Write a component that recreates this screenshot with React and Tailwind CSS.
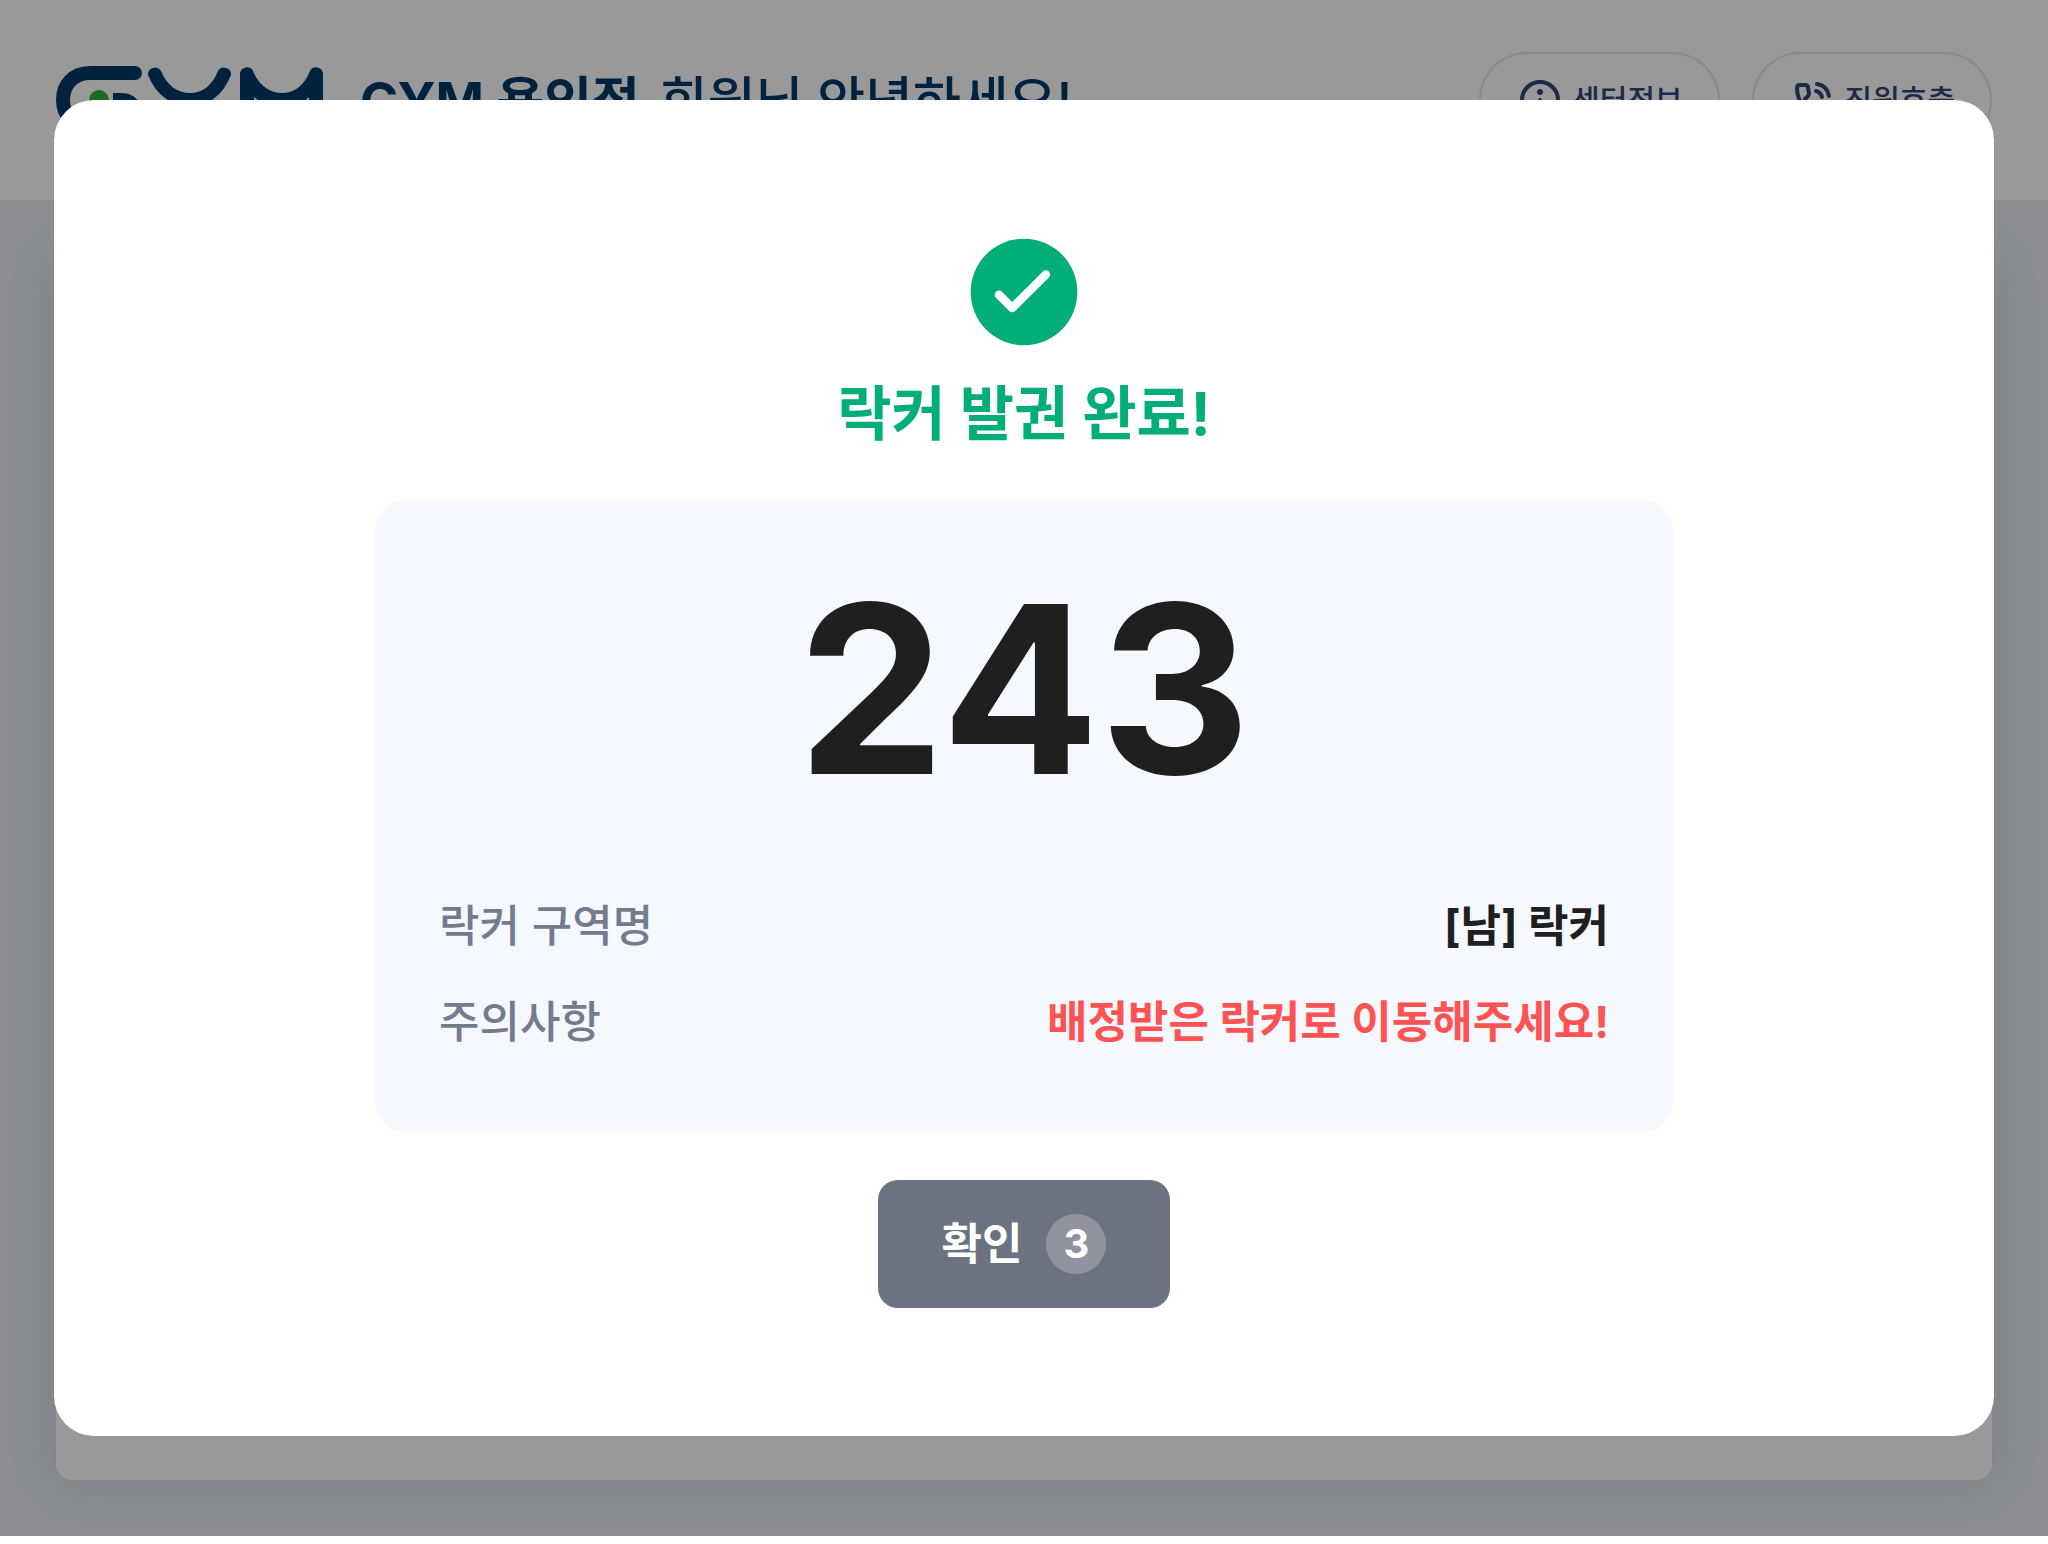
const INFO_ROWS = [
  { label: "락커 구역명", value: "[남] 락커", tone: "text-[#1f1f1f]" },
  { label: "주의사항", value: "배정받은 락커로 이동해주세요!", tone: "text-[#ff5252]" },
];

function Logo() {
  return (
    <svg viewBox="0 0 268 68" className="h-[68px] w-[268px] shrink-0" fill="none" role="img" aria-label="GYM">
      <path d="M79 7H34C17 7 7 19 7 34s10 27 27 27h41V39" stroke="#003a69" strokeWidth="14" strokeLinecap="round" strokeLinejoin="round" />
      <g fill="#003a69">
        <path d="M57 27h8c8 0 14 3 17 8v20H68V40H57z" />
        <path d="M92 9a7 7 0 0 1 13-4c6 15 17 22 29 22s22-7 28-22a7 7 0 0 1 13 4c-6 14-14 26-34 31v28h-14V40c-20-5-29-17-35-31z" />
        <path d="M184 7a7 7 0 0 1 13-2c6 15 17 22 29 22s22-7 28-22a7 7 0 0 1 13 2v61h-14V31c-8 7-16 10-27 10s-20-3-28-10v37h-14z" />
      </g>
      <circle cx="43" cy="34" r="10" fill="#2fae43" />
    </svg>
  );
}

function InfoIcon() {
  return (
    <svg viewBox="0 0 48 48" className="size-12 shrink-0" fill="none" aria-hidden="true">
      <circle cx="24" cy="24" r="18" stroke="#2f4679" strokeWidth="4" />
      <circle cx="24" cy="16" r="3" fill="#2f4679" />
      <path d="M24 24v9" stroke="#2f4679" strokeWidth="4" strokeLinecap="round" />
    </svg>
  );
}

function CallIcon() {
  return (
    <svg viewBox="0 0 48 48" className="size-12 shrink-0" fill="none" stroke="#2f4679" strokeWidth="4" strokeLinecap="round" strokeLinejoin="round" aria-hidden="true">
      <path d="M11 9h5c2 0 3 1 3 3l1 5c0 1 0 2-1 3l-3 3c2 4 5 7 10 9l3-3c1-1 2-1 3-1l5 1c2 0 3 1 3 3v5c0 2-1 3-3 3C20 40 8 28 8 12c0-2 1-3 3-3z" />
      <path d="M28 8C34 9 39 13 40 20M27 15c4 1 5 3 6 6" />
    </svg>
  );
}

function HeaderButton({ icon, children }) {
  return (
    <button type="button" className="flex h-24 items-center gap-2 rounded-full border-2 border-[#e6e6e6] px-[35px] text-[30px] font-medium text-[#2f4679]">
      {icon}
      {children}
    </button>
  );
}

function CheckBadge() {
  return (
    <svg viewBox="0 0 24 24" className="size-32" fill="none" aria-hidden="true">
      <circle cx="12" cy="12" r="10" fill="#02ae78" />
      <path d="M7.300 12.500l2.500 2.500 6.300-6.300" stroke="#fff" strokeWidth="1.600" strokeLinecap="round" strokeLinejoin="round" />
    </svg>
  );
}

export default function App() {
  return (
    <div className="h-screen overflow-hidden bg-white pb-2 font-['Inter','Noto_Sans_CJK_KR',sans-serif]">
      <div className="relative flex h-full flex-col bg-[#e8ecf1]">
        <header className="flex h-[200px] shrink-0 items-center justify-between bg-white px-14">
          <div className="flex items-center gap-9">
            <Logo />
            <p className="flex items-center gap-5 pt-1 text-[52px] font-medium whitespace-nowrap text-[#003a69]">
              <strong className="font-bold">GYM 용인점</strong>
              <span>회원님 안녕하세요!</span>
            </p>
          </div>
          <nav className="flex gap-8">
            <HeaderButton icon={<InfoIcon />}>센터정보</HeaderButton>
            <HeaderButton icon={<CallIcon />}>직원호출</HeaderButton>
          </nav>
        </header>
        <main className="flex flex-1 px-14 py-14">
          <section className="flex-1 rounded-2xl bg-white shadow-[0_0_48px_rgba(60,70,150,0.15)]" />
        </main>

        <div className="absolute inset-0 flex bg-black/40 px-[54px] py-[100px]">
          <div role="dialog" aria-modal="true" aria-labelledby="dialog-title" className="flex flex-1 flex-col items-center rounded-[40px] bg-white px-32 py-32">
            <CheckBadge />
            <h1 id="dialog-title" className="mt-4 text-[59px] leading-[84px] font-bold text-[#02ae78]">
              락커 발권 완료!
            </h1>
            <section className="mt-11 w-full max-w-[1298px] rounded-[32px] bg-[#f5f8ff] px-16 pt-16 pb-[78px]">
              <p className="text-center text-[234px] leading-[250px] font-bold text-[#1f1f1f]">243</p>
              <dl className="mt-20 flex flex-col gap-8 text-[44px] leading-[64px]">
                {INFO_ROWS.map((row) => (
                  <div key={row.label} className="flex justify-between">
                    <dt className="font-medium text-[#757b8f]">{row.label}</dt>
                    <dd className={`font-bold ${row.tone}`}>{row.value}</dd>
                  </div>
                ))}
              </dl>
            </section>
            <button type="button" className="mt-12 flex h-32 items-center gap-6 rounded-[20px] bg-[#6b7280] px-16 text-[44px] font-bold text-white">
              확인
              <span className="flex size-[60px] items-center justify-center rounded-full bg-[#9193a0] text-[40px]">3</span>
            </button>
          </div>
        </div>
      </div>
    </div>
  );
}
